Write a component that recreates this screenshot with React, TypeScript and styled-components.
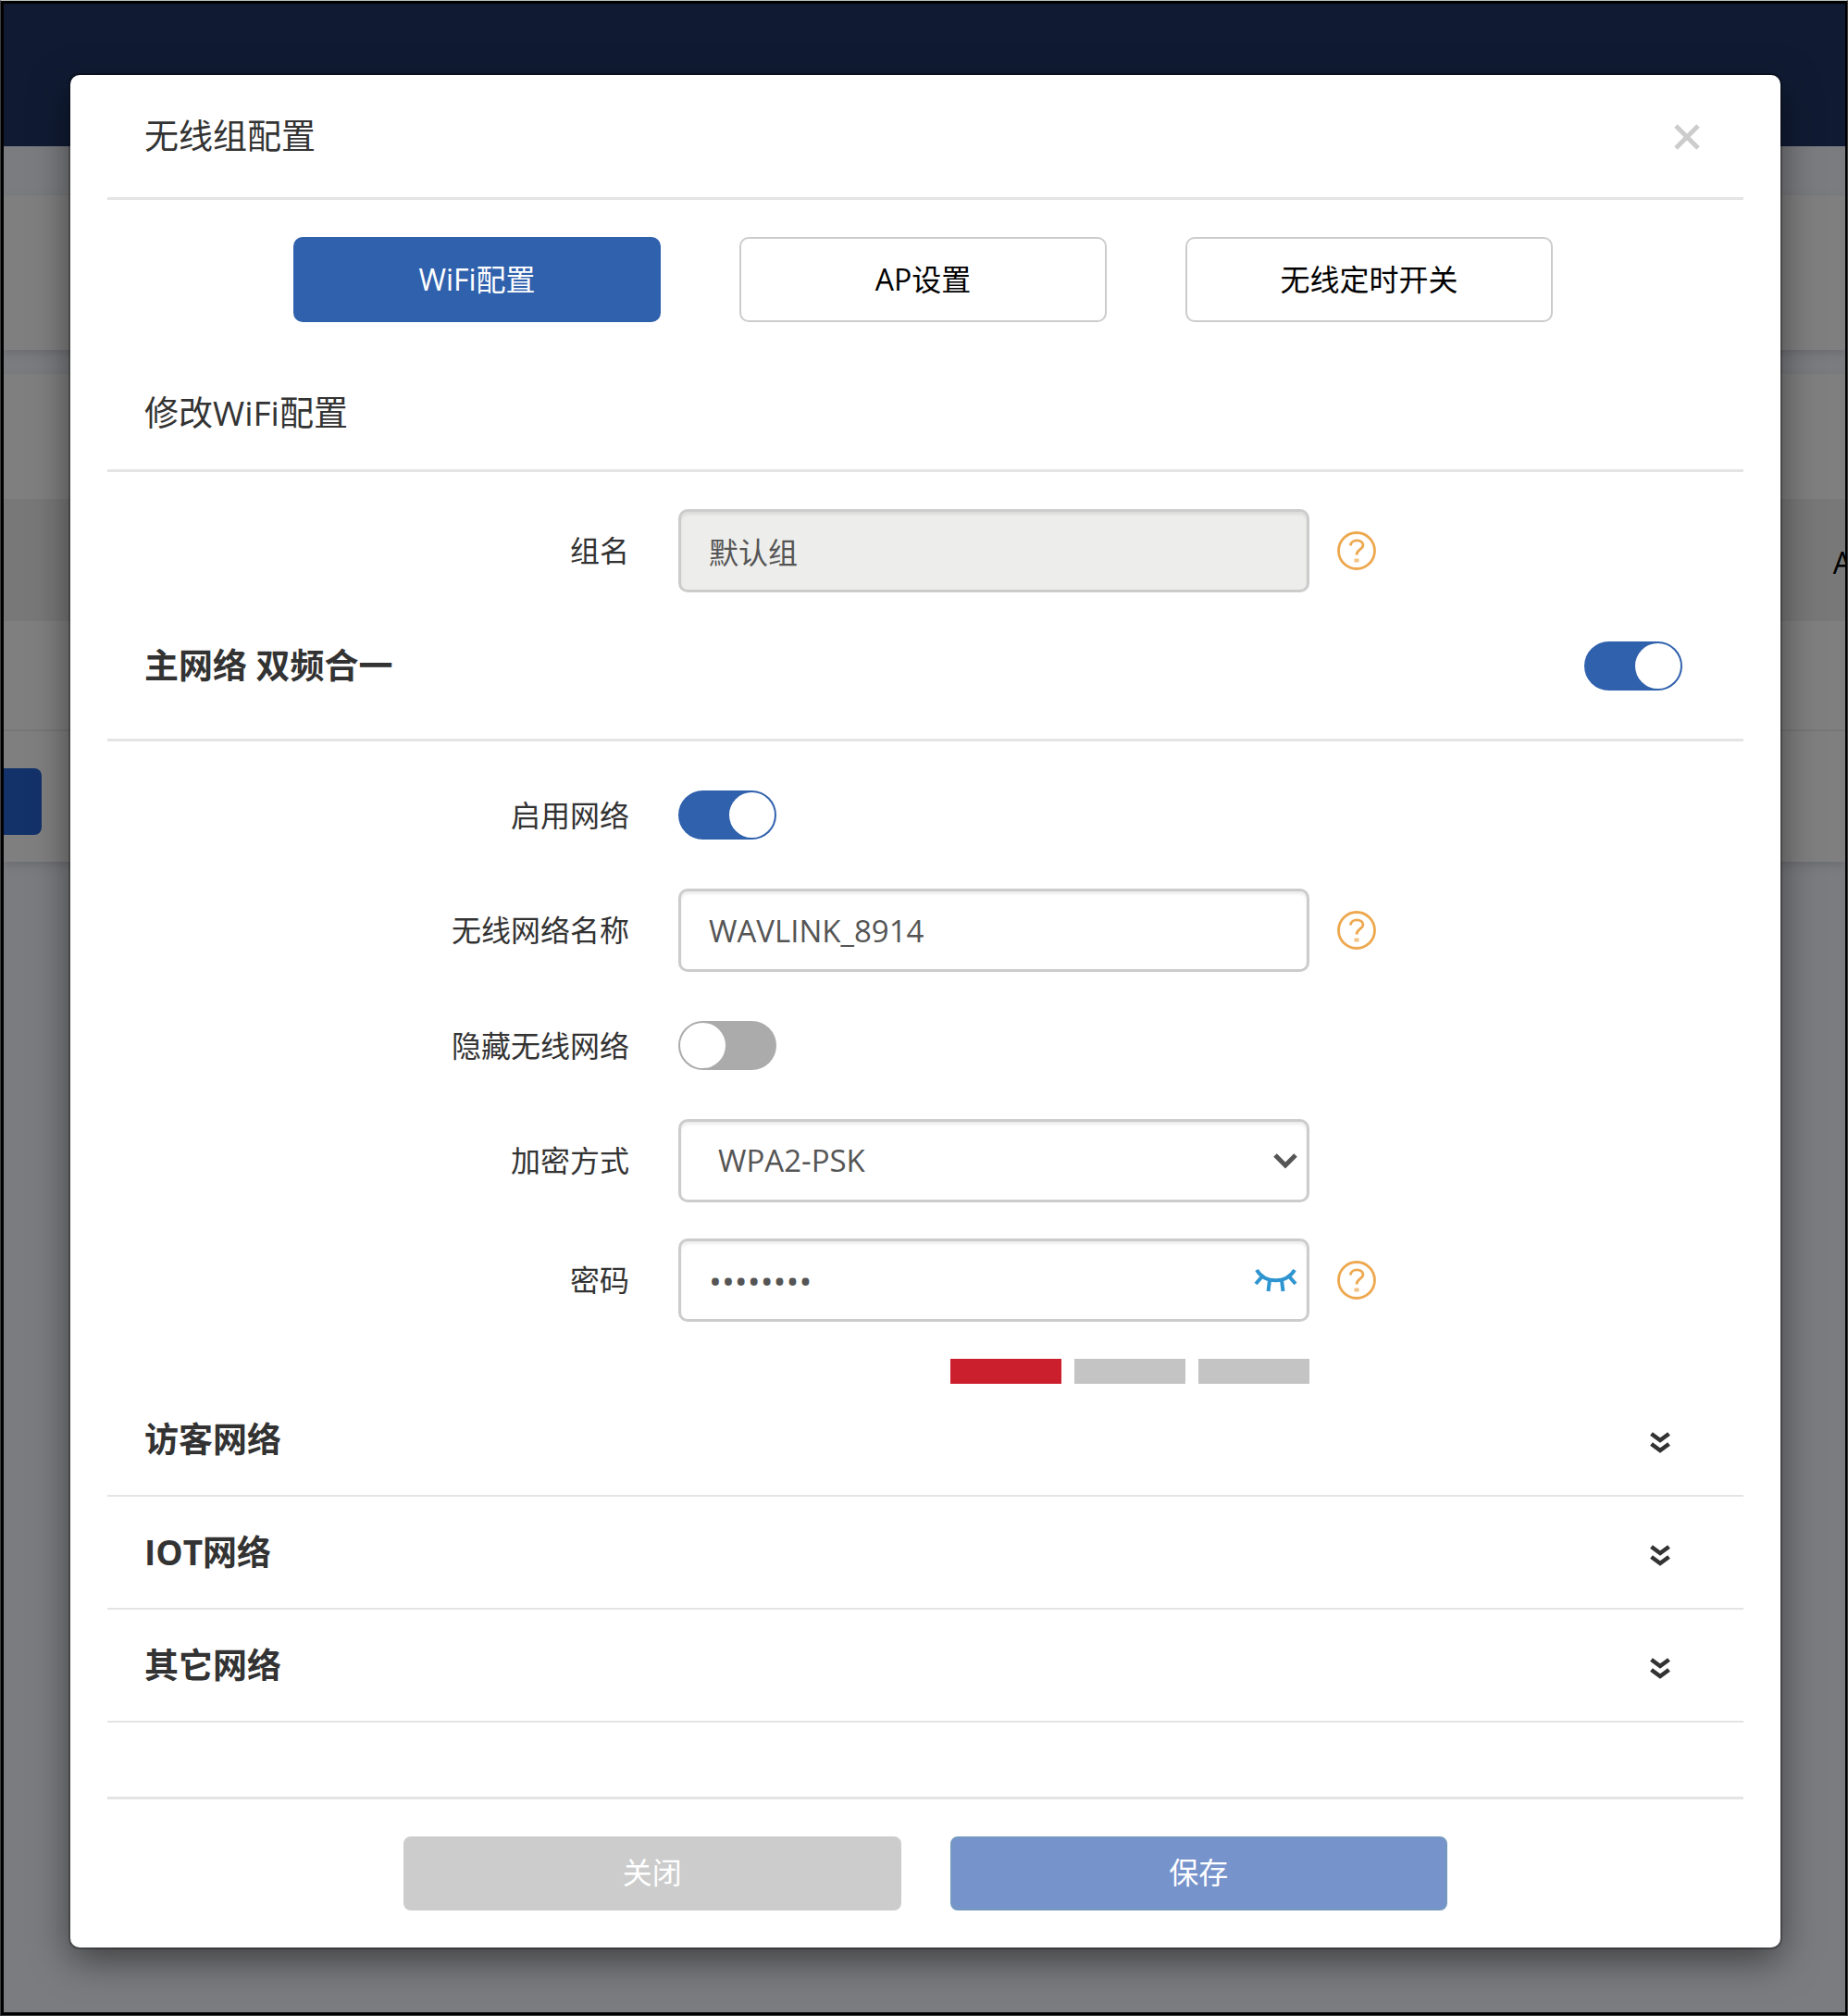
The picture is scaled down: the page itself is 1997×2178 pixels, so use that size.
import React, { useState } from 'react';
import styled, { createGlobalStyle, css } from 'styled-components';

const GlobalStyle = createGlobalStyle`
  *, *::before, *::after { box-sizing: border-box; }
  body {
    margin: 0;
    background: #000;
    color: #333;
    font-family: "Open Sans", "Noto Sans CJK SC", sans-serif;
    font-size: 32px;
    line-height: 48px;
  }
  button, input, select { font: inherit; color: inherit; margin: 0; }
  h1, h2, h3 { margin: 0; font-size: 37px; line-height: 52px; font-weight: 400; }
`;

const Frame = styled.div`
  display: grid;
  min-height: 100vh;
  border: 1px solid #3c3f40;
  border-top-color: #b8c2be;
  padding: 3px 2px 3px 3px;
  background: #000;
`;

const Page = styled.div`
  grid-area: 1 / 1;
  min-width: 0;
  overflow: hidden;
  background: #f6f8ff;
`;

const TopBar = styled.div`
  height: 154px;
  margin-bottom: 53px;
  background: #203666;
`;

const Card = styled.section`
  margin-bottom: 26px;
  background: #fff;
  box-shadow: 0 4px 10px rgba(0, 0, 0, 0.12);
`;

const SummaryCard = styled(Card)`
  height: 167px;
`;

const ListCard = styled(Card)`
  padding: 135px 0 29px;
`;

const ListHead = styled.div`
  display: flex;
  justify-content: flex-end;
  align-items: center;
  height: 132px;
  margin-right: -7px;
  padding-top: 5px;
  background: #f0f0f0;
  color: #000;
`;

const ListRow = styled.div`
  height: 119px;
  border-bottom: 2px solid #eee;
`;

const PageButton = styled.button`
  display: block;
  width: 41px;
  height: 72px;
  margin-top: 40px;
  border: 0;
  border-radius: 0 8px 8px 0;
  background: #2864d4;
`;

const Overlay = styled.div`
  grid-area: 1 / 1;
  z-index: 1;
  min-width: 0;
  padding: 77px 70px 70px 72px;
  background: rgba(0, 0, 0, 0.5);
`;

const Modal = styled.form`
  padding: 0 40px 40px;
  border-radius: 10px;
  background: #fff;
  box-shadow: 0 0 0 2px rgba(0, 0, 0, 0.25), 0 13px 40px rgba(0, 0, 0, 0.5);
`;

const SectionBar = styled.header<{ $height: number; $end?: number }>`
  display: flex;
  align-items: center;
  justify-content: space-between;
  height: ${(p) => p.$height}px;
  padding: 0 ${(p) => p.$end ?? 40}px 0 40px;
  border-bottom: 3px solid #e4e4e4;
`;

const Strong = styled.h3`
  font-weight: 700;
`;

const IconButton = styled.button`
  display: flex;
  padding: 0;
  border: 0;
  background: none;
  cursor: pointer;
`;

const Tabs = styled.nav`
  display: grid;
  grid-template-columns: repeat(3, 1fr);
  gap: 85px;
  margin-bottom: 37px;
  padding: 40px 206px 0 201px;
`;

const Tab = styled.button<{ $active: boolean }>`
  height: 92px;
  border: 2px solid #ccc;
  border-radius: 10px;
  background: #fff;
  color: #000;
  cursor: pointer;
  ${(p) =>
    p.$active &&
    css`
      border-color: #3061ad;
      background: #3061ad;
      color: #fff;
    `}
`;

const Fields = styled.div`
  display: grid;
  row-gap: 53px;
  padding-top: 53px;
`;

const GroupField = styled.div`
  padding-top: 40px;
`;

const PasswordGroup = styled.div`
  display: grid;
  row-gap: 40px;
  padding-top: 39px;
`;

const Row = styled.div`
  display: grid;
  grid-template-columns: minmax(0, 617fr) minmax(0, 682fr) minmax(0, 469fr);
  align-items: center;
`;

const Label = styled.label`
  padding-right: 53px;
  text-align: right;
`;

const Control = styled.div`
  position: relative;
  display: flex;
  grid-column: 2;
`;

const fieldStyle = css`
  width: 100%;
  height: 90px;
  border: 3px solid #ccc;
  border-radius: 10px;
  background: #fff;
  box-shadow: inset 0 3px 3px rgba(0, 0, 0, 0.075);
  color: #555;
  font-size: 33px;
`;

const TextInput = styled.input`
  ${fieldStyle}
  padding: 0 30px;
  &:disabled {
    background: #ededeb;
    font-size: 32px;
  }
  &[type="password"] { font-size: 37px; }
`;

const Select = styled.select`
  ${fieldStyle}
  padding: 0 60px 0 40px;
  appearance: none;
`;

const Inset = styled.span`
  position: absolute;
  top: 0;
  right: 13px;
  bottom: 0;
  display: flex;
  align-items: center;
  pointer-events: none;
`;

const InsetButton = styled(IconButton)`
  position: absolute;
  top: 0;
  right: 13px;
  bottom: 0;
  align-items: center;
`;

const HelpButton = styled(IconButton)`
  margin-left: 30px;
`;

const Switch = styled.input`
  position: relative;
  width: 106px;
  height: 53px;
  margin: 0;
  border-radius: 27px;
  appearance: none;
  background: #ababab;
  cursor: pointer;
  &::after {
    content: "";
    position: absolute;
    top: 2px;
    left: 2px;
    width: 49px;
    height: 49px;
    border-radius: 50%;
    background: #fff;
  }
  &:checked { background: #3061ad; }
  &:checked::after { left: 55px; }
`;

const Strength = styled.div`
  display: grid;
  grid-column: 2;
  grid-template-columns: repeat(3, 120px);
  justify-content: end;
  gap: 14px;
`;

const StrengthBar = styled.span<{ $on?: boolean }>`
  height: 27px;
  background: ${(p) => (p.$on ? '#cc1f2d' : '#c4c4c4')};
`;

const AccordionRow = styled.div`
  display: flex;
  align-items: center;
  justify-content: space-between;
  height: 122px;
  padding: 0 79px 0 40px;
  border-bottom: 2px solid #e4e4e4;
`;

const ExpandButton = styled(IconButton)`
  padding-top: 8px;
`;

const Footer = styled.footer`
  display: grid;
  grid-template-columns: repeat(2, 1fr);
  gap: 53px;
  margin-top: 80px;
  padding: 40px 320px 0;
  border-top: 3px solid #e4e4e4;
`;

const FooterButton = styled.button<{ $primary?: boolean }>`
  height: 80px;
  padding: 0 0 2px;
  border: 2px solid ${(p) => (p.$primary ? '#7499c0' : '#ccc')};
  border-radius: 8px;
  background: ${(p) => (p.$primary ? '#7693cb' : '#ccc')};
  color: #fff;
  cursor: pointer;
`;

const CloseIcon = () => (
  <svg width="28" height="30" viewBox="0 0 28 30" fill="none" stroke="#ccc" strokeWidth="5">
    <path d="M2 4L26 28M26 4L2 28" />
  </svg>
);

const HelpIcon = () => (
  <svg width="42" height="42" viewBox="0 0 42 42" fill="none" stroke="#eda84f">
    <circle cx="21" cy="21" r="19.5" strokeWidth="2.8" />
    <path d="M14.5 15.5C14.5 8 28 8 28 15C28 19.500 21 19.5 21 25.5" strokeWidth="2.8" />
    <path d="M21 29.5V33.5" strokeWidth="5" strokeOpacity="0.7" />
  </svg>
);

const ArrowIcon = () => (
  <svg width="26" height="18" viewBox="0 0 26 18" fill="none" stroke="#555" strokeWidth="5">
    <path d="M2 3L13 14L24 3" />
  </svg>
);

const ClosedEyeIcon = () => (
  <svg width="47" height="26" viewBox="0 0 47 26" fill="none" stroke="#2f95d0" strokeWidth="4">
    <path d="M3 2C12 17 35 17 44 2" />
    <path d="M9 9L2 17M38 9L45 17M17 13L15.500 25M30 13L31.500 25" />
  </svg>
);

const DoubleDownIcon = () => (
  <svg width="22" height="24" viewBox="0 0 22 24" fill="none" stroke="#333" strokeWidth="4.600">
    <path d="M1.500 2L11 9L20.500 2M1.500 13L11 20L20.500 13" />
  </svg>
);

const Help = () => (
  <HelpButton type="button" aria-label="帮助">
    <HelpIcon />
  </HelpButton>
);

const tabs = ['WiFi配置', 'AP设置', '无线定时开关'];
const collapsed = ['访客网络', 'IOT网络', '其它网络'];

export default function App() {
  const [tab, setTab] = useState(0);
  const [ssid, setSsid] = useState('WAVLINK_8914');
  const [password, setPassword] = useState('12345678');
  const [visible, setVisible] = useState(false);

  return (
    <>
      <GlobalStyle />
      <Frame>
        <Page aria-hidden="true">
          <TopBar />
          <SummaryCard />
          <ListCard>
            <ListHead>A</ListHead>
            <ListRow />
            <PageButton type="button" tabIndex={-1} />
          </ListCard>
        </Page>
        <Overlay>
          <Modal role="dialog" aria-labelledby="title" onSubmit={(e) => e.preventDefault()}>
            <SectionBar $height={135} $end={47}>
              <h1 id="title">无线组配置</h1>
              <IconButton type="button" aria-label="关闭窗口">
                <CloseIcon />
              </IconButton>
            </SectionBar>
            <Tabs>
              {tabs.map((name, i) => (
                <Tab key={name} type="button" $active={i === tab} onClick={() => setTab(i)}>
                  {name}
                </Tab>
              ))}
            </Tabs>
            <SectionBar $height={125}>
              <h2>修改WiFi配置</h2>
            </SectionBar>
            <GroupField>
              <Row>
                <Label htmlFor="group">组名</Label>
                <Control>
                  <TextInput id="group" defaultValue="默认组" disabled />
                </Control>
                <Help />
              </Row>
            </GroupField>
            <SectionBar $height={161} $end={66}>
              <Strong as="h2">
                <label htmlFor="merge">主网络 双频合一</label>
              </Strong>
              <Switch id="merge" type="checkbox" defaultChecked />
            </SectionBar>
            <Fields>
              <Row>
                <Label htmlFor="enable">启用网络</Label>
                <Control>
                  <Switch id="enable" type="checkbox" defaultChecked />
                </Control>
              </Row>
              <Row>
                <Label htmlFor="ssid">无线网络名称</Label>
                <Control>
                  <TextInput id="ssid" value={ssid} onChange={(e) => setSsid(e.target.value)} />
                </Control>
                <Help />
              </Row>
              <Row>
                <Label htmlFor="hide">隐藏无线网络</Label>
                <Control>
                  <Switch id="hide" type="checkbox" />
                </Control>
              </Row>
              <Row>
                <Label htmlFor="security">加密方式</Label>
                <Control>
                  <Select id="security" defaultValue="WPA2-PSK">
                    <option>WPA2-PSK</option>
                  </Select>
                  <Inset>
                    <ArrowIcon />
                  </Inset>
                </Control>
              </Row>
            </Fields>
            <PasswordGroup>
              <Row>
                <Label htmlFor="password">密码</Label>
                <Control>
                  <TextInput
                    id="password"
                    type={visible ? 'text' : 'password'}
                    value={password}
                    onChange={(e) => setPassword(e.target.value)}
                  />
                  <InsetButton type="button" aria-label="显示密码" onClick={() => setVisible(!visible)}>
                    <ClosedEyeIcon />
                  </InsetButton>
                </Control>
                <Help />
              </Row>
              <Row>
                <Strength>
                  <StrengthBar $on />
                  <StrengthBar />
                  <StrengthBar />
                </Strength>
              </Row>
            </PasswordGroup>
            {collapsed.map((name) => (
              <AccordionRow key={name}>
                <Strong>{name}</Strong>
                <ExpandButton type="button" aria-label={`展开${name}`}>
                  <DoubleDownIcon />
                </ExpandButton>
              </AccordionRow>
            ))}
            <Footer>
              <FooterButton type="button">关闭</FooterButton>
              <FooterButton type="submit" $primary>
                保存
              </FooterButton>
            </Footer>
          </Modal>
        </Overlay>
      </Frame>
    </>
  );
}
